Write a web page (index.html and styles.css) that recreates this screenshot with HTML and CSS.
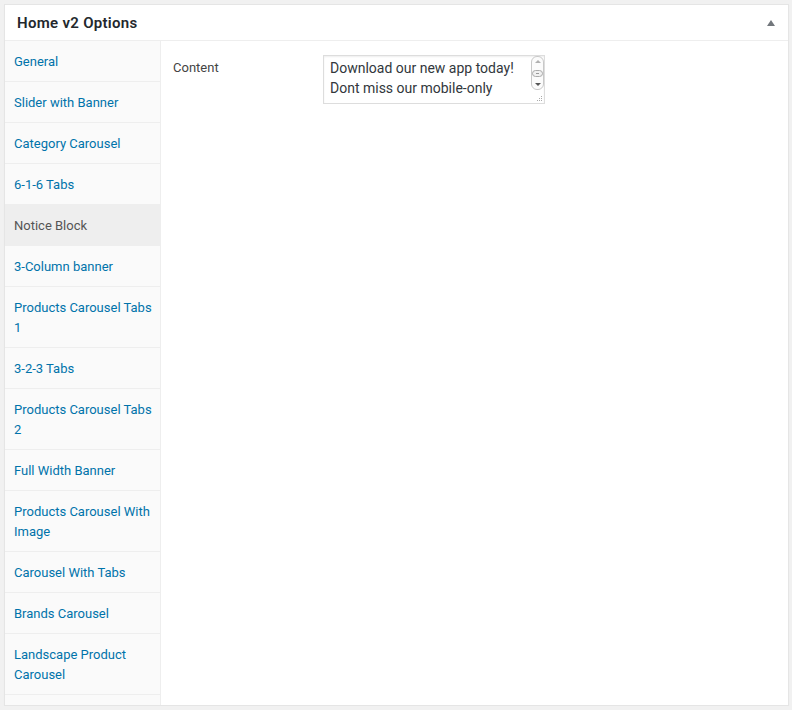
FILE: index.html
```html
<!DOCTYPE html>
<html>
<head>
<meta charset="utf-8">
<link rel="stylesheet" href="styles.css">
</head>
<body>
<div class="postbox">
  <div class="hndle">
    <h2 class="title">Home v2 Options</h2>
    <span class="toggle"></span>
  </div>
  <div class="inside">
    <ul class="tabs">
      <li><a>General</a></li>
      <li><a>Slider with Banner</a></li>
      <li><a>Category Carousel</a></li>
      <li><a>6-1-6 Tabs</a></li>
      <li class="active"><a>Notice Block</a></li>
      <li><a>3-Column banner</a></li>
      <li><a>Products Carousel Tabs 1</a></li>
      <li><a>3-2-3 Tabs</a></li>
      <li><a>Products Carousel Tabs 2</a></li>
      <li><a>Full Width Banner</a></li>
      <li><a>Products Carousel With Image</a></li>
      <li><a>Carousel With Tabs</a></li>
      <li><a>Brands Carousel</a></li>
      <li><a>Landscape Product Carousel</a></li>
    </ul>
    <div class="panel">
      <div class="field">
        <label class="label">Content</label>
        <div class="input-wrap">
          <textarea class="input" rows="2">Download our new app today! Dont miss our mobile-only offers and shop with Android Play.</textarea>
          <div class="scrollbar">
            <span class="arrow up"></span>
            <span class="thumb"></span>
            <span class="arrow down"></span>
          </div>
          <svg class="grip" width="7" height="7" viewBox="0 0 7 7">
            <rect x="5" y="1" width="1" height="1" fill="#aaa"/>
            <rect x="3" y="3" width="1" height="1" fill="#aaa"/>
            <rect x="5" y="3" width="1" height="1" fill="#aaa"/>
            <rect x="1" y="5" width="1" height="1" fill="#aaa"/>
            <rect x="3" y="5" width="1" height="1" fill="#aaa"/>
            <rect x="5" y="5" width="1" height="1" fill="#aaa"/>
          </svg>
        </div>
      </div>
    </div>
  </div>
</div>
</body>
</html>
```
FILE: styles.css
```css
html, body {
  margin: 0;
  padding: 0;
  background: #f1f1f1;
  font-family: Roboto, "Noto Sans", sans-serif;
  font-size: 13px;
  color: #444;
}
body {
  padding: 4px 3px 0 4px;
}
.postbox {
  background: #fff;
  border: 1px solid #e5e5e5;
  box-shadow: 0 1px 1px rgba(0,0,0,0.04);
  height: 702px;
  box-sizing: border-box;
  display: flex;
  flex-direction: column;
}
.hndle {
  height: 35px;
  border-bottom: 1px solid #eee;
  display: flex;
  align-items: center;
  justify-content: space-between;
  padding: 0 12px 0 12px;
  flex-shrink: 0;
}
.title {
  margin: 0;
  font-size: 15px;
  font-weight: 600;
  color: #23282d;
  letter-spacing: 0.3px;
}
.toggle {
  width: 0;
  height: 0;
  border-left: 4px solid transparent;
  border-right: 4px solid transparent;
  border-bottom: 6px solid #72777c;
  margin-right: 1px;
  margin-top: 1px;
}
.inside {
  flex: 1;
  display: flex;
  min-height: 0;
}
.tabs {
  list-style: none;
  margin: 0;
  padding: 0;
  width: 155px;
  flex-shrink: 0;
  background: #fafafa;
  border-right: 1px solid #eee;
  overflow: hidden;
}
.tabs li {
  border-bottom: 1px solid #eee;
  margin: 0;
}
.tabs li a {
  display: block;
  padding: 11px 6px 9px 9px;
  line-height: 20px;
  color: #0073aa;
  font-size: 13px;
  cursor: pointer;
}
.tabs li.active {
  background: #eee;
}
.tabs li.active a {
  color: #555;
}
.panel {
  flex: 1;
  padding: 14px 12px;
}
.field {
  display: flex;
  align-items: flex-start;
}
.label {
  width: 150px;
  flex-shrink: 0;
  padding-top: 5px;
  line-height: 16px;
  font-size: 13px;
  color: #444;
}
.input-wrap {
  position: relative;
  width: 222px;
  height: 49px;
  box-sizing: border-box;
  border: 1px solid #ddd;
  box-shadow: inset 0 1px 2px rgba(0,0,0,0.07);
  padding-top: 2px;
  overflow: hidden;
  background: #fff;
}
.input {
  display: block;
  width: 100%;
  height: 40px;
  box-sizing: border-box;
  margin: 0;
  padding: 0 21px 0 6px;
  border: none;
  background: transparent;
  font-family: Roboto, "Noto Sans", sans-serif;
  font-size: 14px;
  line-height: 20px;
  color: #32373c;
  resize: none;
  overflow: hidden;
  outline: none;
}
.scrollbar {
  position: absolute;
  top: 0;
  right: 0;
  width: 13px;
  height: 34px;
  box-sizing: border-box;
  border: 1px solid #c8c8c8;
  border-radius: 6px;
  background: #fbfbfb;
  display: flex;
  flex-direction: column;
  align-items: center;
  justify-content: space-between;
  padding: 3px 0;
}
.arrow {
  width: 0;
  height: 0;
  border-left: 3px solid transparent;
  border-right: 3px solid transparent;
}
.arrow.up {
  border-bottom: 3px solid #b0b0b0;
}
.arrow.down {
  border-top: 3px solid #555;
}
.thumb {
  width: 11px;
  height: 7px;
  box-sizing: border-box;
  border: 1px solid #aaa;
  border-radius: 4px;
  background: #f0f0f0;
  position: relative;
}
.thumb::after {
  content: "";
  position: absolute;
  left: 3px;
  top: 2px;
  width: 3px;
  height: 1px;
  background: #999;
}
.grip {
  position: absolute;
  right: 1px;
  bottom: 1px;
}
```
